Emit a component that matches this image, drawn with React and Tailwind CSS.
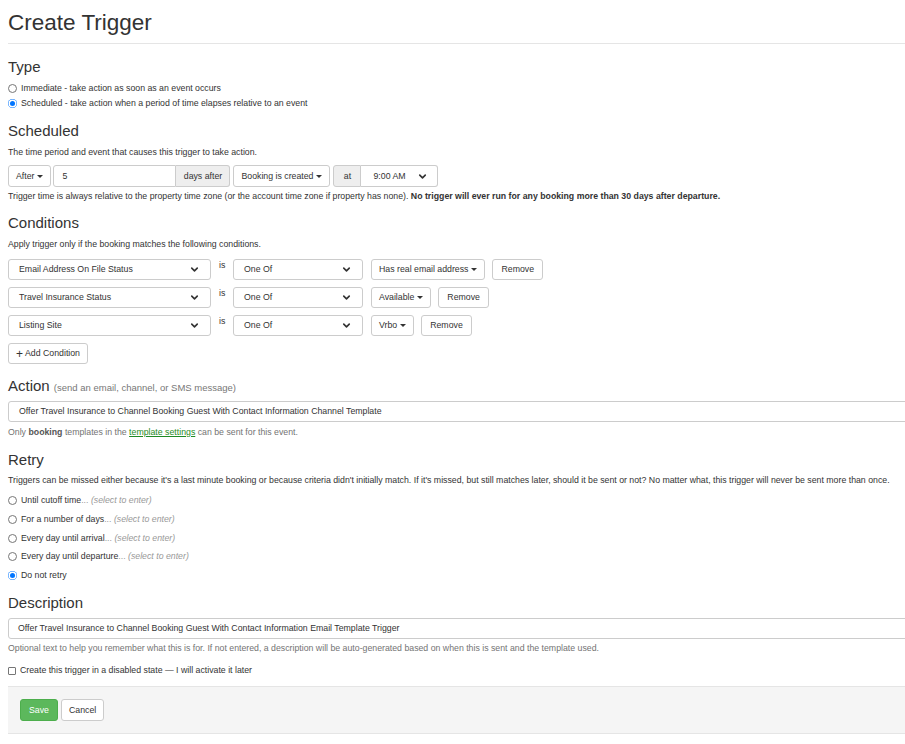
import { ChevronDown } from 'lucide-react';

const CONDITIONS = [
  { field: 'Email Address On File Status', value: 'Has real email address' },
  { field: 'Travel Insurance Status', value: 'Available' },
  { field: 'Listing Site', value: 'Vrbo' },
];

const RETRY_OPTIONS = [
  { label: 'Until cutoff time', hint: true },
  { label: 'For a number of days', hint: true },
  { label: 'Every day until arrival', hint: true },
  { label: 'Every day until departure', hint: true },
  { label: 'Do not retry', hint: false, checked: true },
];

function Caret() {
  return <span className="inline-block w-0 h-0 ml-[3px] align-middle border-x-[3px] border-t-[3px] border-x-transparent border-t-[#333]" />;
}

function Radio({ checked }) {
  if (checked) {
    return (
      <span className="w-[9px] h-[9px] rounded-full bg-[#0075ff] flex items-center justify-center shrink-0">
        <span className="w-[5px] h-[5px] rounded-full bg-[#0075ff] ring-[1.5px] ring-white" />
      </span>
    );
  }
  return <span className="w-[9px] h-[9px] rounded-full border border-[#767676] bg-white shrink-0" />;
}

function Select({ value, className }) {
  return (
    <div className={`h-[21px] border border-[#ccc] rounded-[3px] bg-white flex items-center justify-between pl-[10px] pr-[10px] ${className}`}>
      <span>{value}</span>
      <ChevronDown size={11} strokeWidth={3.5} className="text-[#333]" />
    </div>
  );
}

function Btn({ children, className = '' }) {
  return (
    <button className={`h-[21px] px-[7px] border border-[#ccc] rounded-[3px] bg-white text-[#333] flex items-center ${className}`}>
      {children}
    </button>
  );
}

function Heading({ children, className = '' }) {
  return <h3 className={`text-[15px] leading-[18px] text-[#333] ${className}`}>{children}</h3>;
}

export default function App() {
  return (
    <div className="w-[905px] h-[744px] overflow-hidden bg-white">
      <div className="w-[925px] pl-[8px] text-[8.75px] leading-[13px] text-[#333]" style={{ fontFamily: '"Liberation Sans", Arial, sans-serif' }}>
        <h1 className="text-[22.5px] leading-[26px] pt-[10px] pb-[7px] border-b border-[#e5e5e5]">Create Trigger</h1>

        {/* Type */}
        <Heading className="mt-[14px]">Type</Heading>
        <div className="mt-[6px] flex flex-col gap-[2px]">
          <label className="flex items-center gap-[4px] h-[13px]">
            <Radio />
            <span>Immediate - take action as soon as an event occurs</span>
          </label>
          <label className="flex items-center gap-[4px] h-[13px]">
            <Radio checked />
            <span>Scheduled - take action when a period of time elapses relative to an event</span>
          </label>
        </div>

        {/* Scheduled */}
        <Heading className="mt-[12px]">Scheduled</Heading>
        <p className="mt-[6px]">The time period and event that causes this trigger to take action.</p>
        <div className="mt-[6px] flex items-center h-[22px]">
          <Btn className="h-[22px] px-[7px]">After<Caret /></Btn>
          <div className="ml-[2px] h-[22px] w-[123px] border border-[#ccc] rounded-l-[3px] flex items-center pl-[8px]">5</div>
          <div className="h-[22px] w-[54px] border border-l-0 border-[#ccc] rounded-r-[3px] bg-[#eee] flex items-center justify-center">days after</div>
          <Btn className="ml-[3px] h-[22px] px-[6px]">Booking is created<Caret /></Btn>
          <div className="ml-[3px] h-[22px] w-[28px] border border-[#ccc] rounded-l-[3px] bg-[#eee] flex items-center justify-center">at</div>
          <div className="h-[22px] w-[77px] border border-l-0 border-[#ccc] rounded-r-[3px] flex items-center justify-between pl-[12px] pr-[9px]">
            <span>9:00 AM</span>
            <ChevronDown size={11} strokeWidth={3.5} />
          </div>
        </div>
        <p className="mt-[3px]">
          Trigger time is always relative to the property time zone (or the account time zone if property has none).{' '}
          <b>No trigger will ever run for any booking more than 30 days after departure.</b>
        </p>

        {/* Conditions */}
        <Heading className="mt-[11px]">Conditions</Heading>
        <p className="mt-[6px]">Apply trigger only if the booking matches the following conditions.</p>
        <div className="mt-[8px] flex flex-col gap-[7px]">
          {CONDITIONS.map((c) => (
            <div key={c.field} className="flex items-center">
              <Select value={c.field} className="w-[203px]" />
              <span className="ml-[8px] w-[14px] self-start">is</span>
              <Select value="One Of" className="w-[130px]" />
              <Btn className="ml-[8px]">{c.value}<Caret /></Btn>
              <Btn className="ml-[7px] px-[8px]">Remove</Btn>
            </div>
          ))}
          <Btn className="w-fit gap-[2px]">
            <span className="text-[12px] leading-[12px] font-light">+</span>Add Condition
          </Btn>
        </div>

        {/* Action */}
        <h3 className="mt-[13px] text-[15px] leading-[18px]">
          Action <span className="text-[9.5px] text-[#777]">(send an email, channel, or SMS message)</span>
        </h3>
        <div className="mt-[4px] h-[21px] border border-[#ccc] rounded-l-[3px] flex items-center pl-[10px]">
          Offer Travel Insurance to Channel Booking Guest With Contact Information Channel Template
        </div>
        <p className="mt-[4px] text-[#737373]">
          Only <b className="text-[#555]">booking</b> templates in the{' '}
          <a className="text-[#1f8b24] underline">template settings</a> can be sent for this event.
        </p>

        {/* Retry */}
        <Heading className="mt-[12px]">Retry</Heading>
        <p className="mt-[5px]">
          Triggers can be missed either because it's a last minute booking or because criteria didn't initially match. If it's missed, but still matches later, should it be sent or not? No matter what, this trigger will never be sent more than once.
        </p>
        <div className="mt-[7px] flex flex-col gap-[5.75px]">
          {RETRY_OPTIONS.map((o) => (
            <label key={o.label} className="flex items-center gap-[4px] h-[13px]">
              <Radio checked={o.checked} />
              <span>
                {o.label}
                {o.hint && <span className="text-[#999]">... <i>(select to enter)</i></span>}
              </span>
            </label>
          ))}
        </div>

        {/* Description */}
        <Heading className="mt-[12px]">Description</Heading>
        <div className="mt-[6px] h-[21px] border border-[#ccc] rounded-l-[3px] flex items-center pl-[9px]">
          Offer Travel Insurance to Channel Booking Guest With Contact Information Email Template Trigger
        </div>
        <p className="mt-[3px] text-[#737373]">
          Optional text to help you remember what this is for. If not entered, a description will be auto-generated based on when this is sent and the template used.
        </p>
        <label className="mt-[9px] flex items-center gap-[4px] h-[13px]">
          <span className="w-[8px] h-[8px] border border-[#767676] rounded-[1px] bg-white" />
          <span>Create this trigger in a disabled state — I will activate it later</span>
        </label>

        {/* Form actions */}
        <div className="mt-[9px] h-[48px] bg-[#f5f5f5] border-y border-[#e5e5e5] flex items-center gap-[3px] pl-[12px]">
          <button className="h-[22px] px-[8px] rounded-[3px] bg-[#5cb85c] border border-[#4cae4c] text-white">Save</button>
          <button className="h-[22px] px-[7px] rounded-[3px] bg-white border border-[#ccc] text-[#333]">Cancel</button>
        </div>
      </div>
    </div>
  );
}
